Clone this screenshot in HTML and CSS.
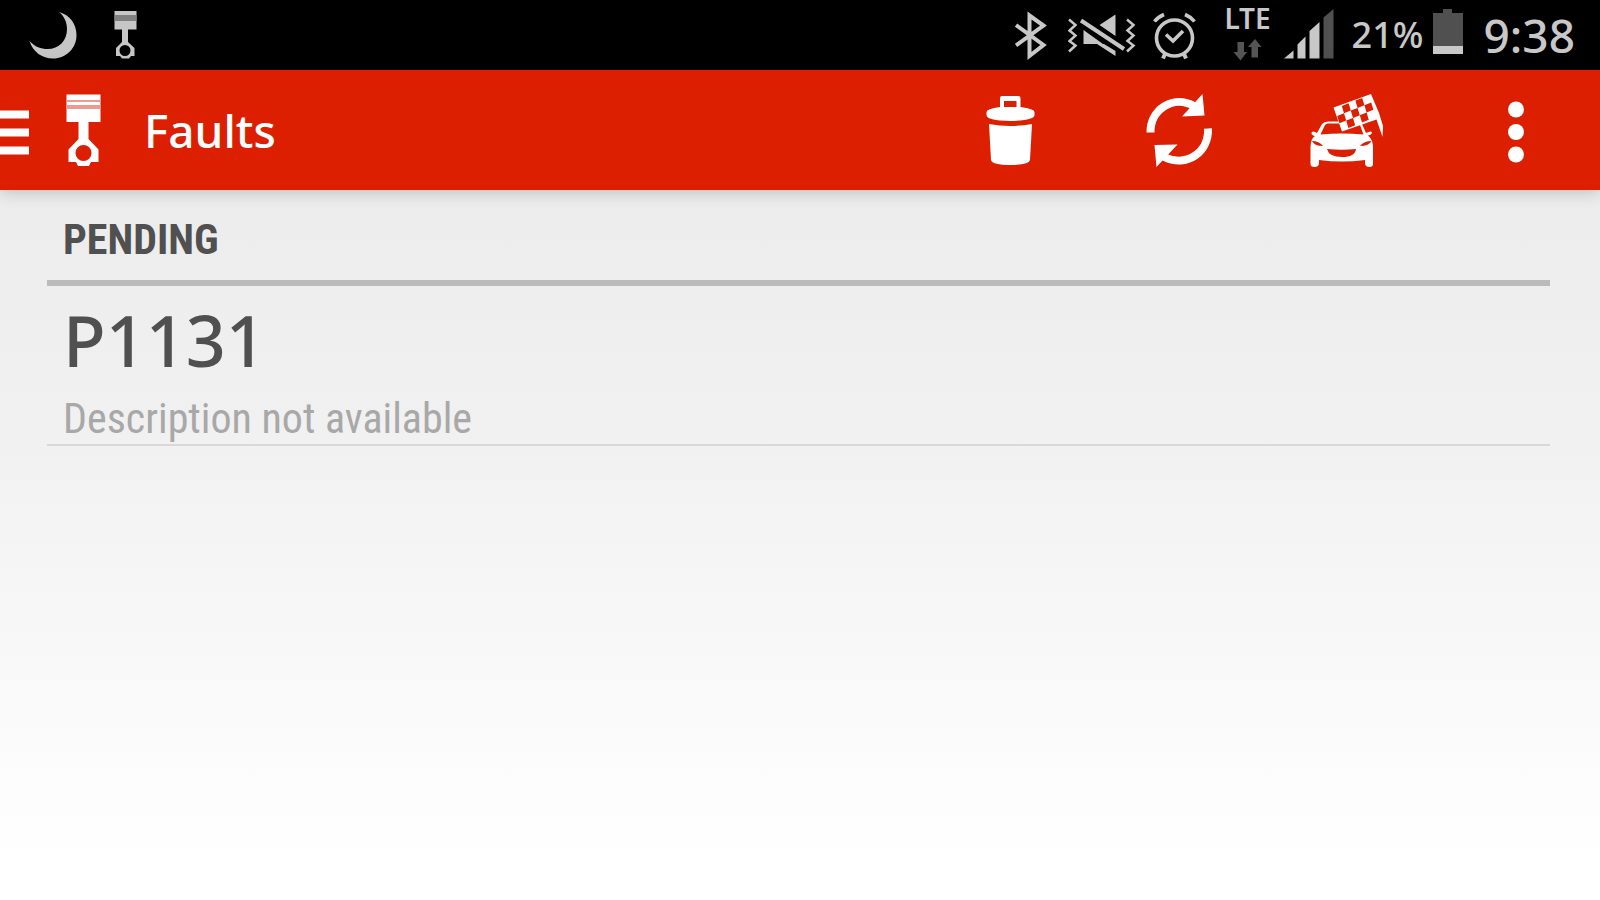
FILE: index.html
```html
<!DOCTYPE html>
<html lang="en">
<head>
<meta charset="utf-8">
<meta name="viewport" content="width=device-width, initial-scale=1">
<title>Faults</title>
<link rel="stylesheet" href="styles.css">
</head>
<body>
<div class="status-bar">
  <div class="status-left">
    <svg class="moon" viewBox="29 0 48 70" width="48" height="70" aria-hidden="true"><path fill="#c6c6c6" d="M59 12C70 15 76.500 24 76.500 35C76.500 48.500 66 58.500 53 58.500C42 58.500 33 52 29.500 41C35 47 41 49 47.500 49C59 49 67 41 67 29C67 22 64 16 59 12Z"/></svg>
    <svg viewBox="114 0 24 70" width="24" height="70" aria-hidden="true"><path fill="#c6c6c6" fill-rule="evenodd" d="M114.500 11H136.500V29.500H128V42L134.500 48V56H131L129 58.500H122L120 56H116V48L122 42V29.500H114.500ZM125 45A5.500 5.500 0 1 0 125 56A5.500 5.500 0 1 0 125 45Z"/><path fill="#808080" d="M114.500 15H136.500V21H114.500Z"/></svg>
  </div>
  <div class="status-right">
    <svg class="bluetooth" viewBox="1014 0 32 70" width="32" height="70" aria-hidden="true"><path fill="none" stroke="#c8c8c8" stroke-width="4" d="M1015 25L1042.500 45L1028.500 56V15.500L1042.500 25.500L1015 45.500"/></svg>
    <svg class="mute" viewBox="1067 0 68 70" width="68" height="70" aria-hidden="true">
      <path fill="#c6c6c6" d="M1082.500 30L1102 44H1082.500ZM1098.500 25L1114.500 14.500V36ZM1096 44H1103L1114.500 51V56Z"/>
      <path fill="none" stroke="#c6c6c6" stroke-width="4" d="M1080 20.500L1123 49"/>
      <path fill="none" stroke="#c6c6c6" stroke-width="2.500" d="M1068 19.500L1074.500 25L1068.500 30.500L1074.500 35.500L1068.500 41L1074.500 45.500L1068 51.500M1126 19.500L1132.500 25L1126.500 30.500L1132.500 35.500L1126.500 41L1132.500 45.500L1126 51.500"/>
    </svg>
    <svg class="alarm" viewBox="1152 0 43 70" width="43" height="70" aria-hidden="true"><g fill="none" stroke="#c8c8c8" stroke-width="3.600"><circle cx="1173.500" cy="38" r="18"/><path d="M1165 34.500L1172 41L1182 31M1153.500 21.500Q1157 17 1163 14.500M1184 14.500Q1190 17 1193.500 21.500"/><path stroke-width="4" d="M1164 54L1162 58.500M1183 54L1185 58.500"/></g></svg>
    <div class="network">
      <span class="lte">LTE</span>
      <svg viewBox="1234 37 30 23" width="30" height="23" aria-hidden="true"><path fill="#555" d="M1238.500 41H1245V51H1248L1241.500 59.500L1234.500 51H1238.500ZM1256 38L1262.500 46H1259V56.500H1252.500V46H1249Z"/></svg>
    </div>
    <svg class="signal" viewBox="1283 0 50 70" width="50" height="70" aria-hidden="true"><path fill="#c8c8c8" d="M1283 58.500L1292.500 50.500V58.500ZM1296.500 58.500V44.500L1304.500 36.500V58.500ZM1308.500 58.500V31L1318.500 22V58.500Z"/><path fill="#505050" d="M1322.500 58.500V17.500L1332.500 9V58.500Z"/></svg>
    <span class="percent">21%</span>
    <svg class="battery" viewBox="1433 0 30 70" width="30" height="70" aria-hidden="true"><path fill="#505050" d="M1443 9H1452V13H1463V46H1433V13H1443Z"/><path fill="#c8c8c8" d="M1433 46H1463V54H1433Z"/></svg>
    <time class="clock" datetime="09:38">9:38</time>
  </div>
</div>
<header class="app-bar">
  <button class="nav" type="button" aria-label="Open navigation">
    <svg viewBox="0 70 102 120" width="102" height="120"><path fill="#fff" d="M0 110.500H29V118.500H0ZM0 128.500H29V136.500H0ZM0 146.500H29V154.500H0Z"/><path fill="#fff" fill-rule="evenodd" d="M66.500 94.500H100.500V122H88.500V139L98.500 149.500V162H91L89 166H78L76 162H68.500V149.500L78.500 139V122H66.500ZM83.500 145A8 8 0 1 0 83.500 161A8 8 0 1 0 83.500 145Z"/><path fill="#ee9a90" d="M66.500 100H100.500V102H66.500ZM66.500 105H100.500V109H66.500Z"/></svg>
  </button>
  <h1 class="title">Faults</h1>
  <div class="actions">
    <button type="button" aria-label="Clear faults"><svg viewBox="986 91 52 78" width="52" height="78"><path fill="#fff" fill-rule="evenodd" d="M1000 107V98Q1000 96 1002 96H1018.500Q1020.500 96 1020.500 98V107Q1034.500 109 1034.500 112V115Q1034.500 120.500 1010.500 121Q986.500 120.500 986.500 115V112Q986.500 109 1000 107ZM1004 101V107H1016.500V101Z"/><path fill="#fff" d="M989 124Q1010 128 1032 124L1030 160Q1029 165 1010.500 165Q992 165 991 160Z"/></svg></button>
    <button type="button" aria-label="Refresh"><svg viewBox="1144 91 72 78" width="72" height="78"><path fill="none" stroke="#fff" stroke-width="8" d="M1150.500 132.500C1150 110 1173 94 1194 106M1208 128.500C1209 152 1187 168 1164 157"/><path fill="#fff" d="M1202.500 94L1204.500 115.500L1182 116.500ZM1154.500 145L1177.500 144.500L1156.500 167Z"/></svg></button>
    <button type="button" aria-label="Race diagnostics"><svg viewBox="1310 91 76 78" width="76" height="78">
      <path fill="#fff" fill-rule="evenodd" d="M1317 133L1322 124Q1324 121.500 1328 121.500H1356Q1360 121.500 1362 124L1366 133Q1372 130 1372 133Q1371 135 1368 135.500Q1373 140 1373 147V164Q1373 167 1369.500 167Q1365 167 1365 163V160Q1342 163 1319 160V163Q1319 167 1314.500 167Q1310.500 167 1310.500 164V147Q1310.500 139 1315 136Q1311 135 1311.500 133Q1312 130 1317 133ZM1325 125L1320.500 134.500Q1342 132.500 1363.500 134.500L1360 125Q1359 123.500 1357 123.500H1328Q1326 123.500 1325 125ZM1312 141Q1314 146 1323 146Q1319 141 1312 141ZM1360 146Q1369 146 1371.500 141Q1364 141 1360 146ZM1327 149Q1342 150.500 1356 149Q1355 157 1342 157Q1329 157 1327 149Z"/>
      <path fill="#fff" d="M1333.500 107.500L1371 94L1379 113L1383 126L1382.500 137L1376.500 119.500L1342 131.500Z"/>
      <path fill="#db1f00" transform="matrix(6.800 -2.700 2.200 7.300 1335 108.700)" d="M1 0H2V1H3V0H4V1H5V2H4V3H3V2H2V3H1V2H0V1H1ZM1 1V2H2V1ZM3 1V2H4V1Z"/>
    </svg></button>
    <button type="button" aria-label="More options"><svg viewBox="1506 91 20 78" width="20" height="78"><g fill="#fff"><circle cx="1516" cy="109.500" r="8"/><circle cx="1516" cy="132" r="8"/><circle cx="1516" cy="154.500" r="8"/></g></svg></button>
  </div>
</header>
<main class="content">
  <h2 class="section">Pending</h2>
  <ul class="faults">
    <li class="fault">
      <div class="code">P1131</div>
      <div class="description">Description not available</div>
    </li>
  </ul>
</main>
</body>
</html>
```
FILE: styles.css
```css
* {
  box-sizing: border-box;
}

body {
  margin: 0;
  min-height: 100vh;
  display: flex;
  flex-direction: column;
  font-family: "Noto Sans", "Open Sans", sans-serif;
}

svg {
  display: block;
  flex: none;
}

.status-bar {
  height: 70px;
  padding: 0 25px 0 29px;
  display: flex;
  justify-content: space-between;
  background: #000;
  color: #c8c8c8;
}

.status-left,
.status-right {
  display: flex;
  align-items: center;
}

.moon {
  margin-right: 37px;
}

.bluetooth {
  margin-right: 21px;
}

.mute {
  margin-right: 17px;
}

.alarm {
  margin-right: 27px;
}

.network {
  width: 50px;
  height: 52px;
  display: flex;
  flex-direction: column;
  align-items: center;
  justify-content: space-between;
}

.lte {
  font-size: 28px;
  font-weight: 600;
  line-height: 18px;
}

.signal {
  margin: 0 18px 0 11px;
}

.percent {
  width: 72px;
  margin-right: 9px;
  font-size: 36px;
  font-weight: 500;
  line-height: 72px;
}

.battery {
  margin-right: 21px;
}

.clock {
  font-size: 46px;
  font-weight: 500;
  line-height: 72px;
}

.app-bar {
  position: relative;
  height: 120px;
  display: flex;
  align-items: center;
  background: #db1f00;
  color: #fff;
  box-shadow: 0 1px 16px rgba(0, 0, 0, 0.22);
}

button {
  padding: 0;
  border: 0;
  background: none;
  color: inherit;
}

.title {
  margin: 0 0 0 42px;
  font-size: 46px;
  font-weight: 500;
  line-height: 120px;
}

.actions {
  margin-left: auto;
  display: flex;
}

.actions button {
  width: 168px;
  height: 120px;
  display: flex;
  align-items: center;
  justify-content: center;
}

.content {
  flex: 1;
  padding: 18px 50px 0 47px;
  background: linear-gradient(#ececec, #f1f1f1 35%, #fefefe 90%, #fff);
}

.section {
  margin: 0;
  padding: 0 16px 8px;
  border-bottom: 6px solid #bbb;
  color: #505050;
  font-family: "Roboto Condensed", Roboto, sans-serif;
  font-size: 42px;
  font-weight: 700;
  line-height: 64px;
  text-transform: uppercase;
}

.faults {
  margin: 0;
  padding: 0;
  list-style: none;
}

.fault {
  padding: 0 16px;
  border-bottom: 2px solid #d8d8d8;
}

.code {
  color: #505050;
  font-size: 70px;
  font-weight: 500;
  line-height: 108px;
}

.description {
  color: #a8a8a8;
  font-family: "Roboto Condensed", Roboto, sans-serif;
  font-size: 42px;
  line-height: 50px;
}
```
